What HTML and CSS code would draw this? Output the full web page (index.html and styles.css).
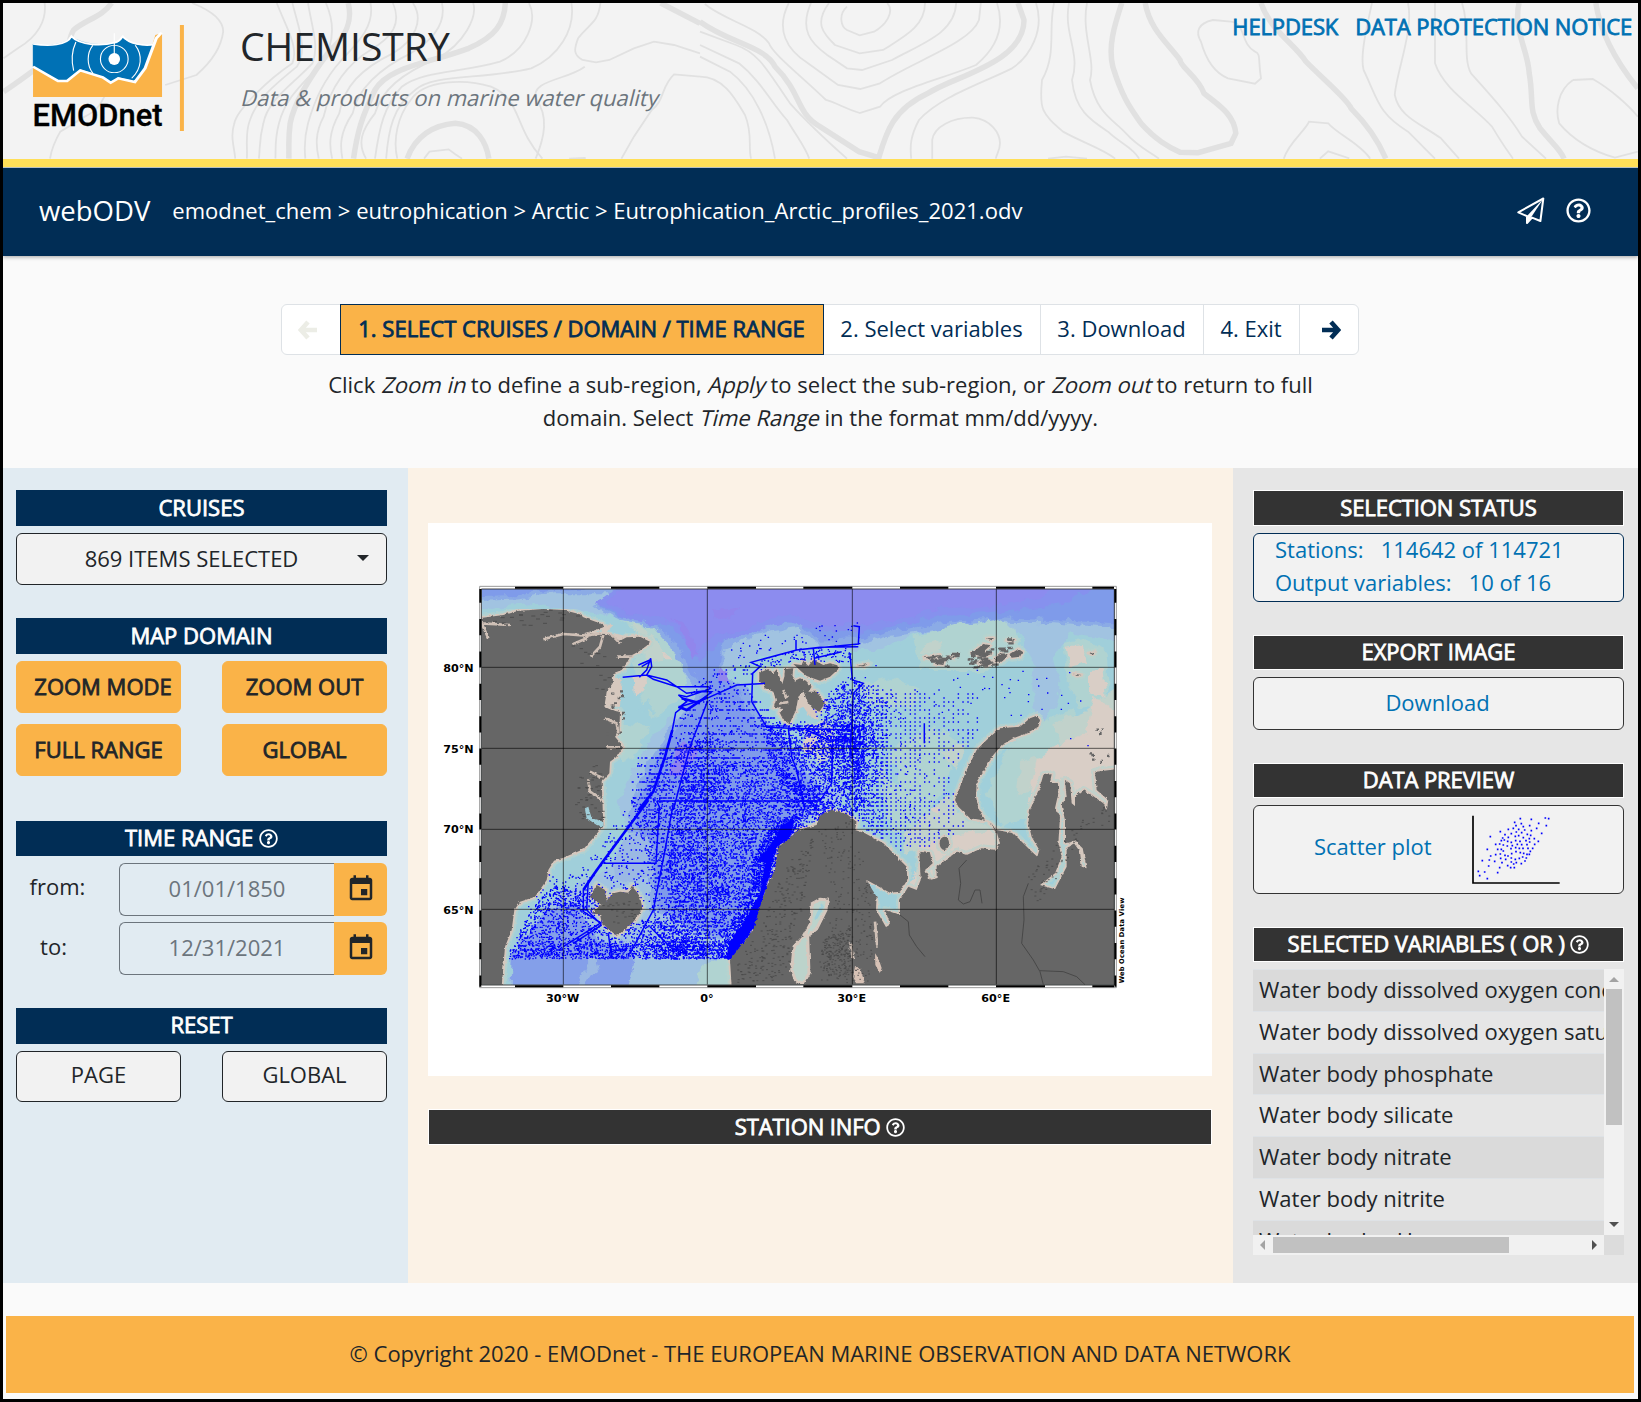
FILE: index.html
```html
<!DOCTYPE html>
<html lang="en">
<head>
<meta charset="utf-8">
<title>webODV - EMODnet Chemistry</title>
<link rel="stylesheet" href="styles.css">
</head>
<body>
<svg class="defs" width="0" height="0" aria-hidden="true">
  <symbol id="help" viewBox="0 0 512 512"><path fill="currentColor" d="M256 8C119.043 8 8 119.083 8 256c0 136.997 111.043 248 248 248s248-111.003 248-248C504 119.083 392.957 8 256 8zm0 448c-110.532 0-200-89.431-200-200 0-110.495 89.472-200 200-200 110.491 0 200 89.471 200 200 0 110.53-89.431 200-200 200zm107.244-255.2c0 67.052-72.421 68.084-72.421 92.863V300c0 6.627-5.373 12-12 12h-45.647c-6.627 0-12-5.373-12-12v-8.659c0-35.745 27.1-50.034 47.579-61.516 17.561-9.845 28.324-16.541 28.324-29.579 0-17.246-21.999-28.693-39.784-28.693-23.189 0-33.894 10.977-48.942 29.969-4.057 5.12-11.46 6.071-16.666 2.124l-27.824-21.098c-5.107-3.872-6.251-11.066-2.644-16.363C184.846 131.491 214.94 112 261.794 112c49.071 0 101.45 38.304 101.45 88.8zM298 368c0 23.159-18.841 42-42 42s-42-18.841-42-42 18.841-42 42-42 42 18.841 42 42z"/></symbol>
  <symbol id="calendar" viewBox="0 0 24 24"><path fill="currentColor" d="M17 12h-5v5h5v-5zM16 1v2H8V1H6v2H5c-1.11 0-1.99.9-1.99 2L3 19c0 1.1.89 2 2 2h14c1.1 0 2-.9 2-2V5c0-1.1-.9-2-2-2h-1V1h-2zm3 18H5V8h14v11z"/></symbol>
</svg>
<div class="page">
  <header class="masthead">
    <svg class="contours" viewBox="3 3 1635 156" preserveAspectRatio="none" aria-hidden="true">
      <g class="thin" transform="scale(.4464 .3333)">
        <path d="M100 9C105 60 85 110 40 145L8 175"/>
        <path d="M430 9C470 30 500 60 500 95C495 150 470 190 440 225L370 255"/>
        <path d="M255 250C225 290 235 320 190 350L135 395C120 430 115 450 112 476"/>
        <path d="M620 9C640 80 670 140 655 190C600 240 530 330 525 370C515 410 525 440 527 476"/>
        <path d="M655 9C670 90 690 150 665 200C610 260 575 300 560 360C548 400 555 440 553 476"/>
        <path d="M690 9C700 90 715 140 700 190C650 260 600 300 590 370C580 420 583 440 580 476"/>
        <path d="M730 9C750 70 750 130 720 190C680 250 640 290 625 370C615 420 618 440 617 476"/>
        <path d="M830 9C840 80 800 130 765 180C725 240 705 300 690 370C680 420 682 450 684 476"/>
        <path d="M880 9C900 70 880 110 830 150C780 190 740 260 725 350C705 400 708 440 714 476"/>
        <path d="M925 9C950 60 930 120 880 160C810 205 770 260 760 340C735 400 738 440 744 476"/>
        <path d="M990 9C1000 70 970 120 920 160C850 205 800 270 790 340C760 400 762 440 767 476"/>
        <path d="M1060 9C1070 50 1040 130 980 175C900 220 855 270 840 340C810 390 800 430 820 476"/>
        <path d="M1185 9C1205 60 1180 150 1120 185C1030 220 950 210 900 260C860 320 850 380 840 476"/>
        <path d="M1280 9C1290 90 1250 170 1190 205C1080 240 970 220 930 270C880 320 870 390 865 476"/>
        <path d="M1215 476C1150 380 1170 300 1100 260C1040 235 950 240 920 300C890 350 880 420 890 476"/>
        <path d="M1200 476C1220 410 1230 350 1200 295C1190 240 1270 240 1310 200"/>
        <path d="M1345 9C1340 70 1320 70 1295 115C1285 150 1285 165 1305 180L1335 187L1365 180L1420 145L1465 125L1510 135L1568 160"/>
        <path d="M1568 230L1510 223C1480 260 1490 300 1460 330L1420 410L1392 476"/>
        <path d="M950 476L962 455L1005 448L1020 463L1035 476M1275 476L1312 474"/>
      </g>
      <g class="thick" transform="scale(.4464 .3333)">
        <path d="M250 9C230 50 190 60 165 90C150 120 160 160 130 175C90 190 80 210 8 275"/>
        <path d="M780 9C790 60 775 110 740 150C700 220 660 300 650 370C645 420 648 440 647 476"/>
        <path d="M1132 9C1130 70 1110 110 1050 145C960 190 870 200 840 270C810 350 800 400 792 476"/>
        <path d="M912 476C930 410 970 375 1020 370C1070 375 1090 430 1095 476"/>
        <path d="M1480 9L1568 70"/>
      </g>
      <g class="thin" transform="translate(700 0) scale(.6 .3333)">
        <path d="M245 20C230 45 235 80 245 90L266 106L290 95C310 75 325 35 312 9M215 9C190 70 205 100 225 135L266 160L305 150C340 110 375 80 375 9M185 9C165 90 185 130 212 165L245 205L270 210L320 180C370 130 425 100 427 9M148 9C125 90 145 150 180 190L230 255L267 267L300 250C360 180 450 130 465 60L468 9"/>
        <path d="M495 9C510 90 490 150 460 195C400 240 320 270 300 320L266 339C240 325 230 310 210 300C170 230 120 160 115 130C95 80 40 60 8 12"/>
        <path d="M0 95L60 135C100 160 115 220 150 310C180 370 210 420 245 476M0 135L65 190C100 240 120 310 145 360C165 420 175 440 182 476M0 170L50 215C90 270 115 370 125 476M0 230C40 230 60 300 75 345C88 400 80 440 85 476"/>
        <path d="M560 9C575 90 550 170 520 205C470 250 400 290 365 360C350 410 350 440 352 476M590 9C580 90 595 160 570 240C565 330 570 340 605 395C640 430 670 445 692 476M615 9C605 100 635 160 620 240C625 330 650 360 680 395C700 430 720 440 732 476M645 9C635 100 660 180 650 240C660 340 690 360 710 400C730 440 745 450 765 476"/>
        <path d="M387 476V420C390 380 420 352 455 353C485 358 500 400 500 430C500 450 495 460 493 476M580 476L610 470L645 476"/>
        <path d="M855 60C830 70 825 95 835 125C845 190 860 220 880 235L925 251L935 235C930 180 935 160 925 155C900 130 910 70 885 65Z"/>
        <path d="M1120 9C1110 90 1100 170 1106 210C1130 300 1130 340 1180 395C1200 430 1210 450 1225 476M1180 9C1190 90 1160 220 1158 285C1165 350 1200 370 1235 415L1265 476M1225 9V190C1240 270 1290 320 1320 380C1340 440 1345 450 1355 476M1270 9C1285 90 1270 170 1285 220C1320 290 1350 350 1370 410L1410 476"/>
        <path d="M973 476C980 430 1010 390 1015 365L1047 370C1060 400 1100 430 1117 476M1033 476L1047 454L1082 475"/>
        <path d="M1455 240L1488 237C1520 270 1550 320 1563 350M1455 240C1430 270 1425 330 1432 370C1460 430 1500 460 1525 473L1563 455"/>
      </g>
      <g class="thick" transform="translate(700 0) scale(.6 .3333)">
        <path d="M0 65C50 130 110 140 125 200C170 280 160 340 200 380L265 455L298 473C310 400 320 330 380 280C420 230 540 190 540 60L530 9"/>
        <path d="M703 9C690 80 680 140 688 200C705 300 720 330 735 370C760 420 780 440 800 457L830 458L885 430L893 400C890 340 860 310 840 280C830 230 800 200 800 180C780 130 750 90 742 9"/>
        <path d="M935 9C950 90 990 130 1010 185C1040 240 1080 300 1085 325C1110 370 1130 420 1143 476"/>
        <path d="M1365 9C1355 90 1380 150 1382 220C1390 300 1380 330 1400 385C1420 430 1435 450 1440 476"/>
        <path d="M1493 9C1500 90 1520 170 1563 265"/>
      </g>
    </svg>
    <svg class="logo" viewBox="30 22 156 112" role="img" aria-label="EMODnet">
      <g transform="scale(.4464 .3333)">
        <path fill="#fab348" d="M74 200L130 245H150L180 212L230 234L248 248L265 236L302 248L325 205L348 105L363 100V291H74Z"/>
        <path fill="#0071b5" stroke="#0071b5" stroke-width="1" d="M74 132C105 138 145 138 160 110C185 135 235 138 255 130C265 135 275 110 275 113C290 130 315 140 345 134L325 205L302 244L265 232L248 246L230 231L180 208L150 240H130L74 200Z"/>
        <path fill="none" stroke="#fff" stroke-width="7" d="M74 200L130 243H150L180 211L230 232L248 248L265 235L302 246L325 205L350 115L362 98"/>
        <path fill="none" stroke="#fff" stroke-width="5" d="M74 132C110 139 150 137 160 109C180 138 230 138 255 128C270 125 272 112 275 109C290 133 320 138 345 134"/>
        <g fill="none" stroke="#fff" stroke-width="2.5"><ellipse cx="256" cy="177" rx="31" ry="41"/><path d="M256 100V165M170 126C160 155 160 185 165 212M208 136C194 160 194 195 208 220M303 136C320 165 318 205 295 235"/></g>
        <ellipse cx="256" cy="177" rx="13" ry="18" fill="#fff"/>
        <path fill="#fab348" d="M403 75H412V393H403Z"/>
      </g>
      <text x="32.5" y="126" class="logo-text" textLength="130" lengthAdjust="spacingAndGlyphs">EMODnet</text>
    </svg>
    <div class="titles">
      <h1>CHEMISTRY</h1>
      <p><i>Data &amp; products on marine water quality</i></p>
    </div>
    <nav class="top-links"><a>HELPDESK</a><a>DATA PROTECTION NOTICE</a></nav>
  </header>

  <div class="navbar">
    <span class="brand">webODV</span>
    <span class="crumbs">emodnet_chem &gt; eutrophication &gt; Arctic &gt; Eutrophication_Arctic_profiles_2021.odv</span>
    <span class="nav-icons">
      <svg width="28" height="28" viewBox="0 0 28 28"><path fill="none" stroke="#fff" stroke-width="2" stroke-linejoin="round" d="M1.3 15.3L26.3 1.5L23.4 24L15 20.6L10 26V19.2Z"/><path fill="#fff" d="M10 19L26.5 1.5L14 20.5L10 26.5Z"/></svg>
      <svg width="25" height="25"><use href="#help"/></svg>
    </span>
  </div>

  <section class="intro">
    <div class="steps">
      <span class="step step-prev"><svg width="20" height="20" viewBox="0 0 20 20"><path d="M10 2L2.8 10L10 18M3.5 10H19"/></svg></span>
      <span class="step step-1">1. SELECT CRUISES / DOMAIN / TIME RANGE</span>
      <span class="step step-2">2. Select variables</span>
      <span class="step step-3">3. Download</span>
      <span class="step step-4">4. Exit</span>
      <span class="step step-next"><svg width="20" height="20" viewBox="0 0 20 20"><path d="M10 2L17.2 10L10 18M16.5 10H1"/></svg></span>
    </div>
    <p class="hint">Click <i>Zoom in</i> to define a sub-region, <i>Apply</i> to select the sub-region, or <i>Zoom out</i> to return to full domain. Select <i>Time Range</i> in the format mm/dd/yyyy.</p>
  </section>

  <main class="workspace">
    <aside class="left">
      <h2 class="bar">CRUISES</h2>
      <div class="select"><span>869 ITEMS SELECTED</span><b class="caret"></b></div>
      <h2 class="bar gap-a">MAP DOMAIN</h2>
      <div class="buttons">
        <button class="btn warm wide">ZOOM MODE</button><button class="btn warm">ZOOM OUT</button>
        <button class="btn warm">FULL RANGE</button><button class="btn warm">GLOBAL</button>
      </div>
      <h2 class="bar time">TIME RANGE <svg class="q"><use href="#help"/></svg></h2>
      <div class="date"><label>from:</label><span class="field">01/01/1850</span><span class="cal"><svg width="30" height="30"><use href="#calendar"/></svg></span></div>
      <div class="date second"><label>to:</label><span class="field">12/31/2021</span><span class="cal"><svg width="30" height="30"><use href="#calendar"/></svg></span></div>
      <h2 class="bar reset">RESET</h2>
      <div class="buttons"><button class="btn plain">PAGE</button><button class="btn plain">GLOBAL</button></div>
    </aside>

    <section class="middle">
      <svg class="map" viewBox="24 39 2352 1659">
        <defs>
          <clipPath id="frame"><path d="M185 237H2083V1424H185Z"/></clipPath>
          <filter id="rough" x="0" y="0" width="1" height="1"><feTurbulence type="fractalNoise" baseFrequency=".09" numOctaves="3" seed="4"/><feDisplacementMap in="SourceGraphic" scale="9" xChannelSelector="R" yChannelSelector="G"/></filter>
          <filter id="wavy" x="0" y="0" width="1" height="1"><feTurbulence type="fractalNoise" baseFrequency=".03" numOctaves="4" seed="9"/><feDisplacementMap in="SourceGraphic" scale="32" xChannelSelector="R" yChannelSelector="G"/></filter>
          <g id="land">
            <path d="M175 325L250 315 290 303 370 297 430 300 480 313 490 322 545 342 550 352 520 362 490 370 560 372 600 392 620 382 660 380 690 395 680 407 655 425 632 437 620 460 605 480 580 490 578 520 560 545 553 590 575 600 600 605 598 665 585 680 610 710 590 740 570 755 568 790 545 815 550 945 535 965 490 1018 430 1043 402 1052 385 1080 380 1110 345 1160 300 1175 283 1200 275 1260 255 1310 245 1430 175 1430Z"/>
            <path d="M570 1160L560 1172 555 1140 530 1125 518 1145 512 1160 530 1175 545 1185 515 1208 540 1215 546 1240 590 1277 620 1255 650 1225 667 1195 660 1160 650 1145 635 1128 625 1148 600 1145 580 1150Z"/>
            <path d="M1018 488L1045 477 1060 490 1070 478 1078 500 1087 522 1093 500 1095 477 1120 475 1117 500 1125 512 1140 505 1165 515 1150 545 1135 560 1128 600 1108 642 1090 630 1078 605 1092 598 1062 590 1068 570 1060 545 1035 535 1018 512Z"/>
            <path d="M1120 462L1145 465 1150 452 1165 468 1180 450 1210 465 1230 460 1252 466 1255 477 1230 500 1200 512 1160 498 1145 485ZM1140 515L1150 512 1175 530 1165 545 1190 545 1215 580 1198 605 1175 592 1162 575Z"/>
            <path d="M1510 443L1560 434 1540 447ZM1550 452L1575 448 1570 465 1545 462ZM1590 440L1608 436 1600 444ZM1655 430L1690 402 1712 406 1690 425 1715 432 1690 442ZM1672 458L1700 448 1722 458 1700 468ZM1700 385L1722 384 1715 391ZM1760 390L1785 390 1780 396ZM1722 445L1745 430 1762 440 1745 455 1725 455ZM1768 434L1795 417 1808 425 1800 440 1775 443ZM2005 429L2025 426 2020 434ZM1960 491L1985 495 1970 498ZM1310 468L1345 462 1330 469Z"/>
            <path d="M1860 630L1855 650 1820 670 1780 685 1745 705 1720 735 1695 775 1670 815 1668 860 1675 895 1695 932 1650 925 1615 890 1605 870 1620 830 1640 780 1670 720 1700 690 1740 655 1800 650 1830 625 1850 617Z"/>
            <path d="M935 1430L930 1350 960 1310 1000 1260 1020 1190 1040 1130 1065 1080 1075 1010 1110 985 1135 960 1190 945 1200 915 1235 900 1280 912 1310 935 1305 960 1335 970 1390 1000 1425 1035 1460 1070 1462 1110 1440 1145 1410 1148 1340 1110 1370 1155 1368 1200 1400 1255 1410 1240 1395 1200 1440 1215 1440 1170 1465 1130 1490 1140 1502 1110 1498 1025 1530 1030 1538 1060 1515 1080 1530 1110 1550 1105 1550 1070 1610 1025 1640 1035 1685 1015 1730 1020 1740 1000 1730 965 1705 935 1730 960 1780 970 1830 1020 1852 1040 1858 1020 1835 980 1825 940 1830 900 1860 830 1870 795 1895 793 1890 815 1914 820 1915 850 1905 895 1920 920 1915 1000 1925 1040 1905 1090 1860 1125 1905 1138 1940 1070 1940 1015 1962 1000 1980 1025 1985 1070 2000 1075 1988 1015 1965 993 1935 1000 1935 930 1925 885 1940 860 1935 810 1950 820 1955 880 1985 905 1965 890 1965 860 1990 840 2015 855 2050 880 2060 900 2065 870 2030 840 2025 785 2090 778 2090 1430Z"/>
            <ellipse cx="1573" cy="1000" rx="14" ry="20"/>
          </g>
        </defs>
        <path fill="#fff" d="M24 39H2376V1698H24Z"/>
        <g clip-path="url(#frame)">
          <path fill="#a0cfda" d="M180 230H2090V1430H180Z"/>
          <g filter="url(#wavy)">
            <path fill="#a1c3e1" d="M100 180H2190V400L1950 370 1900 450 1920 540 1880 640 1840 590 1840 470 1800 370 1690 345 1500 370 1380 420 1200 420 1010 440 900 500 1000 620 1180 760 1280 850 1160 940 1090 1050 1000 1200 940 1300 930 1480H260L280 1320 380 1180 480 1120 580 1060 630 960 590 880 680 700 800 580 790 470 700 360 560 315 350 285 100 300Z"/>
            <path fill="#8babe6" d="M100 180H2190V362L1900 340 1740 338 1600 352 1400 382 1340 400 1200 412 1130 350 1000 375 910 420 910 500 975 520 1010 600 1100 700 1215 850 1110 950 1050 1080 990 1200 900 1300 690 1200 690 1100 630 1000 630 880 690 750 780 610 840 540 790 480 750 405 690 350 600 327 520 292 610 250 400 250 300 268 100 275Z"/>
            <path fill="#7f9bea" d="M100 180H2190V345L1900 330 1740 325 1600 335 1400 365 1340 383 1200 395 1130 333 1000 355 910 395 890 500 950 525 980 600 1070 700 1190 850 1090 950 1030 1080 970 1200 900 1280 710 1200 710 1100 650 1000 650 880 710 750 800 610 860 540 810 480 770 400 700 340 600 317 540 290 630 230 400 240 300 255 100 260Z"/>
            <path fill="#8691ee" d="M530 280L640 200H2090L1900 290 1700 310 1560 315 1450 345 1340 365 1200 360 1100 335 960 380 890 400 840 455 750 345 640 330Z"/>
            <path fill="#8c8cef" d="M560 275L660 200H1940L1860 265 1700 290 1560 295 1450 325 1340 345 1200 340 1100 315 950 365 870 385 830 430 760 335 640 315Z"/>
            <path fill="#9186ec" d="M760 320L800 350 835 430 820 450 790 380ZM740 790L775 710 800 700 840 720 790 800ZM870 300L960 290 950 320 880 325ZM890 480L910 475 930 520 900 515Z"/>
            <path fill="#849fe9" d="M270 1480L275 1340 370 1200 460 1180 540 1300 640 1300 640 1360 610 1480Z"/>
            <path fill="#9bb9e3" d="M430 1480L520 1340 550 1340 460 1480ZM570 1060L630 970 690 980 700 1100 580 1120Z"/>
            <path fill="#b0d3d1" d="M600 330L700 350 760 420 800 500 780 570 740 600 690 620 660 560 640 450 720 400ZM600 640L690 650 640 740 600 760ZM1480 380L1600 345 1730 330 1790 360 1800 420 1760 450 1700 480 1500 480ZM1370 790L1440 700 1540 650 1620 690 1560 860 1480 960 1420 970ZM1770 700L1850 650 1960 600 1990 720 1860 900 1750 950 1700 850ZM1930 400L2000 385 2060 430 2070 600 1980 590 1940 500ZM800 1480L850 1360 930 1340 940 1480ZM1350 580L1300 530 1420 500 1500 540 1480 600Z"/>
            <path fill="#c1d2cb" d="M640 340L690 360 730 440 680 460ZM1450 970L1580 860 1650 930 1750 950 1700 1010 1450 1030ZM1900 640L2000 600 2120 520V700L1930 720ZM1520 400L1570 390 1550 430 1500 430ZM1800 760L1860 740 1850 840 1790 860ZM1560 720L1640 700 1610 780ZM1150 640L1220 630 1260 720 1190 760 1150 700Z"/>
            <path fill="#a0cfda" d="M1400 760L1440 770 1430 830 1400 820ZM650 600L690 570 700 610Z"/>
            <path fill="#d9cec6" d="M1850 750L1920 700 2000 670 2020 560 2120 620V910H1820ZM1940 410L1985 405 1995 460 1950 470ZM2010 480L2050 475 2060 560 2010 550ZM640 500L690 490 670 540 645 550ZM720 430L750 430 760 445 730 445ZM1530 900L1555 890 1550 925ZM1440 1160L1500 1060 1490 1010 1640 970 1740 960 1740 1040 1600 1050 1530 1130ZM1150 680L1190 680 1180 720 1160 730Z"/>
          </g>
          <g filter="url(#rough)">
            <use href="#land" fill="none" stroke="#b8d3cd" stroke-width="24" stroke-linejoin="round" opacity=".7"/>
            <use href="#land" fill="none" stroke="#d6c8be" stroke-width="11" stroke-linejoin="round"/>
            <path fill="#d6c8be" d="M545 342L580 345 560 365 620 378 640 385 600 410 545 385ZM575 500L605 510 600 590 550 590 560 545ZM1125 560L1165 545 1185 600 1195 630 1170 620 1150 590 1130 600Z"/>
          </g>
          <path id="stations" fill="none" stroke="#00f" stroke-width="4.2"/>
          <path fill="#00f" d="M1085 945L1125 925 1110 985 1070 1010 1050 1090 1035 1140 1010 1240 935 1348H920L925 1300 975 1230 1020 1150 1035 1060 1010 1050 1050 1010Z" filter="url(#rough)"/>
          <g fill="#666" filter="url(#rough)"><use href="#land"/><path id="islets" fill="none" stroke="#666" stroke-width="7"/></g>
          <g class="fjords" filter="url(#rough)">
            <path d="M370 388L430 372 500 377 540 370M460 402L500 385 505 370M512 440L540 410 550 375M183 340L270 345M183 335L205 385M570 370L600 400M590 440L640 440"/>
            <path stroke="#a0cfda" d="M510 785L550 805M505 810L510 845 545 870M555 625L590 640 595 670M560 712L600 712"/>
            <path stroke-width="5" d="M1080 580L1105 576M1090 540L1100 565M1290 1300L1300 1345M1365 1235L1372 1310"/>
          </g>
          <g filter="url(#rough)">
            <path fill="#bcd3cb" stroke="#d6c8be" stroke-width="9" d="M1200 1168L1222 1170 1218 1200 1190 1256 1163 1278 1167 1390 1150 1420 1127 1412 1115 1380 1122 1310 1152 1278 1172 1240 1177 1180Z"/>
            <path fill="#a0cfda" d="M1205 1180L1212 1190 1190 1230 1183 1225Z"/>
            <path fill="#d6c1b5" d="M1305 1368L1320 1375 1335 1420 1308 1420 1300 1400ZM1365 1330L1375 1345 1387 1380 1380 1390 1366 1365Z"/>
            <path fill="#a0cfda" d="M1345 1120L1400 1152 1430 1155 1425 1195 1385 1185ZM530 945L500 925 495 895 505 890 515 925 550 935V950Z"/>
          </g>
          <path id="relief" fill="none" stroke="#454545" stroke-width="2.2"/>
          <path class="river" d="M1640 1050L1617 1075 1622 1120 1615 1170 1630 1182 1650 1175 1665 1140 1680 1140 1686 1180M1440 1215L1465 1235 1468 1275 1490 1310 1515 1340M1825 1120L1810 1160 1812 1230 1805 1300 1840 1350 1860 1385 1870 1424M1860 1382L1930 1385 1970 1400 1995 1424"/>
          <g class="tracks">
            <path d="M608 502L680 495 740 510 800 550 855 542 872 535 865 530 770 530 700 508 680 495M658 502L680 480 692 445 695 470 680 495M655 465L690 450M665 470L690 455M775 555L800 560 845 545 875 545 845 570 780 590 800 575 775 555M790 590L767 608 757 660M862 575L810 710 760 900"/>
            <path d="M845 572L950 525 1035 520M995 575L998 490 1020 470 993 457 1130 420 1200 412 1315 410M1128 390V420L1315 402 1318 350 1300 347M1180 415L1185 465M1183 445L1265 425M995 575L1040 652 1110 655 1290 660M1160 660L1225 690H1300M1105 655L1115 740 1130 780 1155 900M1290 430L1297 510 1330 520 1300 550 1290 740M1513 640V700M1238 700L1235 820 1200 873H1140"/>
            <path d="M710 873H1190M710 873L718 890 708 1060H550M760 880L735 1020 700 1200 630 1330M505 1110L500 1200 540 1240 430 1310M490 1140V1205L545 1240M565 1270L575 1345M460 1300L545 1245M690 1250L760 1320"/>
            <path d="M757 660L735 740 700 845 655 900M685 870L545 1060 520 1095 490 1140M775 590L800 600 860 560M785 565L840 580"/>
          </g>
          <g class="grid"><path d="M430 237V1424M862 237V1424M1297 237V1424M1729 237V1424M185 472H2083M185 715H2083M185 958H2083M185 1198H2083"/></g>
        </g>
        <path fill="none" stroke="#999" stroke-width="3" d="M179 229H2089V1433H179Z"/>
        <path fill="none" stroke="#222" stroke-width="2.5" d="M184 237H2083V1425H184Z"/>
        <g fill="none" stroke="#000" stroke-width="6">
          <path d="M285 233H430M573 233H718M862 233H1008M1150 233H1297M1440 233H1585M1728 233H1875M2017 233H2082M285 1429H430M573 1429H718M862 1429H1008M1150 1429H1297M1440 1429H1585M1728 1429H1875M2017 1429H2082"/>
          <path d="M181 237V278M2086 237V278M181 327V1430M2086 327V1430" stroke-dasharray="48.6"/>
        </g>
        <g class="axis">
          <text x="161" y="485" text-anchor="end">80°N</text><text x="161" y="728" text-anchor="end">75°N</text>
          <text x="161" y="970" text-anchor="end">70°N</text><text x="161" y="1211" text-anchor="end">65°N</text>
          <text x="428" y="1475" text-anchor="middle">30°W</text><text x="861" y="1475" text-anchor="middle">0°</text>
          <text x="1295" y="1475" text-anchor="middle">30°E</text><text x="1727" y="1475" text-anchor="middle">60°E</text>
          <text class="credit" transform="translate(2112 1420) rotate(-90)" textLength="257">Web Ocean Data View</text>
        </g>
      </svg>
      <h2 class="bar dark">STATION INFO <svg class="q"><use href="#help"/></svg></h2>
    </section>

    <aside class="right">
      <h2 class="bar dark">SELECTION STATUS</h2>
      <div class="card status"><div>Stations: &nbsp; 114642 of 114721</div><div>Output variables: &nbsp; 10 of 16</div></div>
      <h2 class="bar dark gap-b">EXPORT IMAGE</h2>
      <a class="card download">Download</a>
      <h2 class="bar dark gap-b">DATA PREVIEW</h2>
      <a class="card scatter"><span>Scatter plot</span>
        <svg width="90" height="72" viewBox="756 1062 270 216"><path d="M759 1067V1269H1019" fill="none" stroke="#000" stroke-width="5"/><path class="points" d="M901 1076h0M934 1078h0M976 1074h0M986 1076h0M884 1087h0M904 1091h0M956 1090h0M979 1097h0M929 1097h0M888 1097h0M910 1100h0M880 1105h0M896 1108h0M914 1110h0M934 1112h0M950 1105h0M965 1120h0M865 1108h0M841 1115h0M811 1130h0M874 1121h0M889 1116h0M905 1118h0M922 1123h0M932 1126h0M855 1124h0M865 1132h0M886 1129h0M896 1127h0M910 1133h0M928 1136h0M943 1136h0M955 1144h0M848 1134h0M844 1142h0M853 1140h0M863 1144h0M874 1147h0M887 1142h0M900 1144h0M918 1142h0M929 1146h0M944 1153h0M827 1153h0M839 1152h0M850 1155h0M862 1158h0M877 1157h0M892 1153h0M905 1154h0M921 1154h0M938 1165h0M802 1168h0M833 1168h0M844 1168h0M850 1173h0M873 1166h0M887 1163h0M898 1165h0M909 1165h0M924 1165h0M931 1174h0M812 1188h0M827 1184h0M841 1182h0M855 1186h0M864 1188h0M875 1181h0M888 1175h0M901 1178h0M911 1180h0M921 1183h0M928 1183h0M787 1202h0M808 1200h0M824 1204h0M842 1195h0M857 1198h0M874 1194h0M886 1198h0M898 1195h0M908 1191h0M919 1194h0M806 1218h0M846 1208h0M863 1217h0M874 1206h0M881 1212h0M889 1208h0M904 1211h0M915 1203h0M839 1223h0M872 1223h0M883 1223h0M775 1234h0M794 1236h0M833 1238h0M779 1247h0M802 1256h0"/></svg></a>
      <h2 class="bar dark gap-b">SELECTED VARIABLES ( OR ) <svg class="q"><use href="#help"/></svg></h2>
      <div class="list">
        <div class="rows">
          <div>Water body dissolved oxygen concentration</div><div>Water body dissolved oxygen saturation</div><div>Water body phosphate</div><div>Water body silicate</div><div>Water body nitrate</div><div>Water body nitrite</div><div>Water body pH</div>
        </div>
        <div class="vscroll"><u class="up"></u><b></b><u class="down"></u></div>
        <div class="hscroll"><u class="prev"></u><b></b><u class="next"></u></div>
        <div class="corner"></div>
      </div>
    </aside>
  </main>
  <footer>© Copyright 2020 - EMODnet - THE EUROPEAN MARINE OBSERVATION AND DATA NETWORK</footer>
</div>
<script src="map.js"></script>
</body>
</html>
```
FILE: map.js
```js
// Seeded generator keeps the station scatter identical on every load.
var seed = 20211;
function rnd() {
  seed = (seed * 1664525 + 1013904223) % 4294967296;
  return seed / 4294967296;
}

function inside(poly, x, y) {
  var hit = false;
  for (var i = 0, j = poly.length - 2; i < poly.length; j = i, i += 2) {
    var xi = poly[i], yi = poly[i + 1], xj = poly[j], yj = poly[j + 1];
    if ((yi > y) !== (yj > y) && x < (xj - xi) * (y - yi) / (yj - yi) + xi) hit = !hit;
  }
  return hit;
}

// Fills a polygon with marks; "snap" is the share of marks placed on survey rows.
function scatter(poly, count, snap, gx, gy, len) {
  var xs = poly.filter(function (v, i) { return i % 2 === 0; });
  var ys = poly.filter(function (v, i) { return i % 2 === 1; });
  var x0 = Math.min.apply(null, xs), x1 = Math.max.apply(null, xs);
  var y0 = Math.min.apply(null, ys), y1 = Math.max.apply(null, ys);
  var out = '';
  for (var n = 0; n < count;) {
    var x = x0 + rnd() * (x1 - x0), y = y0 + rnd() * (y1 - y0);
    if (!inside(poly, x, y)) continue;
    n++;
    if (rnd() < snap) {
      y = Math.round(y / gy) * gy;
      if (gx) x = Math.round(x / gx) * gx;
    }
    out += 'M' + x.toFixed(0) + ' ' + y.toFixed(0) + 'h' + len;
  }
  return out;
}

// Normally distributed marks around a centre, for heavily sampled spots.
function cluster(cx, cy, sx, sy, count) {
  var out = '';
  for (var n = 0; n < count; n++) {
    var x = cx + (rnd() + rnd() + rnd() - 1.5) * 1.6 * sx;
    var y = Math.min(1347, cy + (rnd() + rnd() + rnd() - 1.5) * 1.6 * sy);
    out += 'M' + x.toFixed(0) + ' ' + y.toFixed(0) + 'h4.2';
  }
  return out;
}

document.getElementById('stations').setAttribute('d',
  scatter([255, 1347, 330, 1200, 400, 1130, 520, 1150, 600, 1250, 700, 1220, 935, 1347], 1500, 0.1, 0, 12, 4.2) +
  scatter([260, 1347, 290, 1300, 900, 1300, 935, 1347], 600, 0.2, 0, 12, 4.2) +
  scatter([300, 1210, 400, 1120, 500, 1060, 640, 860, 720, 800, 700, 1210, 480, 1190], 340, 0.2, 0, 12, 4.2) +
  scatter([630, 880, 720, 715, 860, 700, 860, 1347, 680, 1347, 700, 1100], 1200, 0.4, 0, 12, 4.2) +
  scatter([650, 740, 760, 720, 860, 700, 1000, 760, 860, 880, 620, 880], 420, 0.85, 0, 24, 4.2) +
  scatter([760, 640, 800, 600, 900, 570, 1000, 560, 1130, 700, 1150, 760, 860, 760], 520, 0.7, 0, 24, 4.2) +
  scatter([790, 760, 1050, 750, 1250, 900, 1080, 990, 940, 1347, 760, 1330, 730, 1100], 4400, 0.3, 0, 12, 4.2) +
  scatter([1020, 640, 1130, 640, 1330, 640, 1330, 870, 1290, 930, 1120, 900, 1050, 750], 2000, 0.3, 0, 12, 4.2) +
  scatter([1060, 940, 1150, 900, 1130, 980, 1060, 1090, 1020, 1240, 940, 1347, 890, 1347, 930, 1240, 990, 1130, 1000, 1040], 1300, 0, 0, 12, 4.2) +
  scatter([1210, 560, 1290, 500, 1340, 530, 1370, 700, 1360, 960, 1290, 900, 1220, 700], 700, 0.4, 7, 12, 4.2) +
  cluster(1290, 670, 65, 90, 550) + cluster(850, 705, 60, 30, 140) + cluster(1250, 690, 60, 30, 160) +
  cluster(760, 1320, 30, 20, 90) + cluster(895, 1150, 25, 25, 90) + cluster(440, 1165, 50, 35, 90) + cluster(720, 920, 50, 25, 60) +
  scatter([1300, 510, 1360, 520, 1400, 560, 1400, 980, 1360, 980, 1300, 920], 480, 0.75, 14, 12, 4.2) +
  scatter([1360, 545, 1500, 545, 1500, 980, 1440, 1030, 1340, 960], 620, 0.9, 14.4, 12, 4.2) +
  scatter([1460, 545, 1660, 545, 1690, 640, 1600, 780, 1600, 900, 1580, 1000, 1480, 1010], 270, 0.95, 14.4, 12, 4.2) +
  scatter([1340, 850, 1590, 850, 1640, 950, 1540, 1010, 1420, 1030], 110, 0.95, 14.4, 12, 4.2) +
  scatter([865, 480, 990, 460, 1000, 600, 870, 600, 790, 530], 120, 0.6, 0, 12, 4.2) +
  scatter([890, 430, 970, 380, 1090, 370, 1330, 320, 1330, 400, 1100, 430, 990, 470], 50, 0, 0, 12, 4.2) +
  scatter([1000, 455, 1130, 420, 1290, 415, 1300, 460, 1130, 450, 1020, 480], 110, 0, 0, 12, 4.2) +
  scatter([1480, 480, 1980, 480, 2010, 720, 1900, 700, 1740, 620], 34, 0, 0, 12, 4.2));

document.getElementById('islets').setAttribute('d',
  scatter([1515, 445, 1600, 425, 1615, 440, 1570, 475, 1540, 465], 14, 0, 0, 1, 15) +
  scatter([1620, 465, 1655, 420, 1710, 395, 1760, 425, 1725, 465, 1680, 475], 34, 0, 0, 1, 14) +
  scatter([1700, 385, 1790, 380, 1760, 420], 3, 0, 0, 1, 16) +
  scatter([2035, 640, 2080, 640, 2080, 770, 2000, 750], 8, 0, 0, 1, 8) +
  scatter([525, 600, 600, 520, 610, 620, 605, 740, 570, 700], 14, 0, 0, 1, 9));

document.getElementById('relief').setAttribute('d',
  scatter([950, 1350, 1020, 1260, 1080, 1090, 1180, 970, 1160, 1150, 1110, 1300, 1100, 1410, 950, 1420], 260, 0, 0, 1, 6) +
  scatter([1190, 960, 1290, 930, 1350, 1130, 1360, 1420, 1180, 1420, 1240, 1180], 240, 0, 0, 1, 5) +
  scatter([1200, 1290, 1290, 1250, 1290, 1400, 1210, 1400], 180, 0, 0, 1, 5) +
  scatter([190, 330, 380, 300, 480, 320, 400, 345, 190, 350], 22, 0, 0, 1, 12) +
  scatter([450, 400, 560, 400, 580, 480, 540, 600, 520, 560], 14, 0, 0, 1, 10) +
  scatter([470, 780, 540, 760, 550, 930, 460, 940], 45, 0, 0, 1, 8) +
  scatter([540, 1180, 650, 1170, 640, 1240, 580, 1260], 25, 0, 0, 1, 7) +
  scatter([1820, 1100, 1930, 980, 2060, 860, 2075, 980, 2000, 940, 1880, 1160, 1840, 1180], 70, 0, 0, 1, 6));
```
FILE: styles.css
```css
* { box-sizing: border-box; }
body { margin: 0; font: 400 22px/33px "Open Sans", "Noto Sans", sans-serif; color: #212529; background: #fafafa; }
.defs { position: absolute; }
.page { width: 1641px; height: 1402px; border: 3px solid #000; background: #fafafa; overflow: hidden; }
h1, h2, p { margin: 0; font-weight: 400; }
/* Slanted upright face instead of the narrower true italic */
i { display: inline-block; font-style: normal; transform: skewX(-14deg); transform-origin: 0 76%; }

.masthead { position: relative; height: 164px; background: #f3f3f3; border-bottom: 8px solid #ffdf58; display: flex; align-items: flex-start; }
.contours { position: absolute; left: 0; top: 0; width: 1635px; height: 156px; }
.contours path { fill: none; stroke: #e1e1e1; vector-effect: non-scaling-stroke; }
.thin path { stroke-width: 1.8; }
.thick path { stroke-width: 5.5; }
.logo { position: relative; width: 156px; height: 112px; margin: 19px 0 0 27px; }
.logo-text { font: 500 30.5px Roboto, sans-serif; fill: #000; stroke: #000; stroke-width: .3; }
.titles { position: relative; margin: 14px 0 0 54px; }
.titles h1 { font-size: 39px; line-height: 58px; }
.titles p { color: #6c757d; margin-top: 6px; }
.top-links { position: relative; margin-left: auto; padding: 7px 6px 0 0; display: flex; gap: 17px; color: #0071b3; letter-spacing: -.12px; -webkit-text-stroke: .8px #0071b3; }

.navbar { height: 89px; background: #012d55; border-top: 1px solid #b9c0bf; color: #fff; display: flex; align-items: center; padding: 0 47px 3px 36px; box-shadow: 0 1px 4px rgba(0,0,0,.35); }
.brand { font-size: 27.5px; margin-right: 22px; }
.crumbs { letter-spacing: .02px; }
.nav-icons { margin-left: auto; display: flex; gap: 21px; align-items: center; }

.intro { height: 212px; padding-top: 48px; display: flex; flex-direction: column; align-items: center; }
.steps { display: flex; width: 1078px; height: 51px; margin-right: 2px; background: #fff; border: 1px solid #dee2e6; border-radius: 6px; color: #012d55; }
.step { border-right: 1px solid #dee2e6; display: flex; align-items: center; justify-content: center; white-space: nowrap; padding-bottom: 2px; }
.step svg { fill: none; stroke: #012d55; stroke-width: 4.6; margin-top: 2px; }
.step-prev { width: 58px; border: 0; padding-right: 6px; }
.step-prev svg { stroke: #ecede6; }
.step-1 { width: 484px; margin: -1px 0; background: #fab348; border: 1px solid #012d55; -webkit-text-stroke: .8px #012d55; }
.step-2 { width: 217px; }
.step-3 { width: 163px; }
.step-4 { width: 96px; }
.step-next { flex: 1; border: 0; padding-left: 4px; }
.hint { width: 1040px; margin-top: 13px; text-align: center; }

.workspace { height: 815px; display: grid; grid-template-columns: 405px 825px 405px; }
.left { background: #e1ebf2; padding: 22px 21px 0 13px; }
.middle { background: #fbf2e6; padding: 55px 21px 0 20px; }
.right { background: #e6e6e6; padding: 22px 14px 0 20px; }
.bar { height: 36px; padding-top: 1px; background: #012d55; color: #fff; font-size: 22px; line-height: 33px; text-align: center; -webkit-text-stroke: .8px #fff; }
.bar.dark { background: #333; border: 1px solid #fff; padding-top: 0; letter-spacing: -.08px; line-height: 32px; }
.q { width: 19px; height: 19px; vertical-align: -2px; }
.gap-a { margin-top: 33px; }
.gap-b.bar { margin-top: 33px; height: 35px; line-height: 31px; }
.select { height: 52px; margin-top: 7px; border: 1px solid #212529; border-radius: 6px; background: #f2f2f2; display: flex; align-items: center; justify-content: center; padding-bottom: 2px; }
.select span { margin-left: 51px; }
.caret { margin-left: 59px; border: 6.5px solid transparent; border-top-color: #212529; border-bottom: 0; }
.buttons { display: grid; grid-template-columns: 165px 165px; justify-content: space-between; row-gap: 11px; margin-top: 7px; }
.btn { font: inherit; color: #212529; height: 52px; padding: 0 0 1px; border-radius: 6px; border: 1px solid #212529; background: #f2f2f2; }
.warm { background: #fab348; border-color: #fab348; -webkit-text-stroke: .8px #212529; }
.wide { padding-left: 9px; }
.plain { height: 51px; padding-bottom: 4px; }
.time { margin-top: 45px; height: 35px; padding-top: 0; margin-bottom: 7px; }
.date { height: 53px; display: grid; grid-template-columns: 103px 215px 53px; }
.date label { padding-top: 7px; text-align: center; padding-right: 20px; }
.second { margin-top: 6px; }
.second label { padding-top: 8px; padding-right: 28px; }
.field { border: 1px solid #6c757d; border-right: 0; border-radius: 6px 0 0 6px; color: #6c757d; text-align: center; padding-top: 8px; }
.cal { background: #fab348; border-radius: 0 6px 6px 0; display: flex; align-items: center; justify-content: center; }
.cal svg { margin-bottom: 2px; }
.reset { margin-top: 33px; padding-top: 0; }

.map { display: block; width: 784px; height: 553px; margin-bottom: 33px; }
.fjords path { fill: none; stroke: #cfc0b6; stroke-width: 8; }
.tracks path { fill: none; stroke: #00f; stroke-width: 4.5; }
.tracks path:last-child { stroke-width: 8; }
.river { fill: none; stroke: #484848; stroke-width: 3; }
.grid path { fill: none; stroke: #000; stroke-opacity: .6; stroke-width: 3; }
.axis { font: 700 33.5px "DejaVu Sans", sans-serif; }
.axis .credit { font-size: 20px; }

.card { display: block; margin-top: 7px; border: 1px solid #333; border-radius: 6px; background: #f2f2f2; color: #0071b3; }
.status { height: 69px; padding: 0 0 0 21px; border-color: #012d55; line-height: 33px; }
.status div { white-space: nowrap; position: relative; top: -1px; }
.download { height: 53px; text-align: center; padding: 8px 2px 0 0; }
.scatter { height: 89px; display: flex; align-items: center; padding-left: 60px; }
.scatter svg { margin: 0 0 0 40px; }
.scatter span { margin-top: -6px; }
.points { fill: none; stroke: #00f; stroke-width: 5; stroke-linecap: square; }
.list { height: 286px; margin-top: 7px; display: grid; grid-template: 266px 20px / 351px 20px; }
.rows { overflow: hidden; }
.rows div { height: 41.8px; border-top: 1px solid #dee2e6; padding: 3px 6px 0; white-space: nowrap; }
.rows div:nth-child(odd) { background: #dadada; }
.vscroll, .hscroll { background: #f1f1f1; display: flex; align-items: center; }
.vscroll { flex-direction: column; }
.vscroll b { width: 16px; height: 136px; margin-top: 7px; background: #c1c1c1; }
.hscroll b { width: 236px; height: 16px; margin-left: 8px; background: #c1c1c1; }
.up, .down, .prev, .next { border: 5px solid transparent; }
.up { margin-top: 8px; border-bottom-color: #a3a3a3; border-top: 0; }
.down { margin: auto 0 8px; border-top-color: #505050; border-bottom: 0; }
.prev { margin-left: 7px; border-right-color: #a3a3a3; border-left: 0; }
.next { margin: 0 7px 0 auto; border-left-color: #505050; border-right: 0; }
.corner { background: #dcdcdc; }
footer { margin: 33px 4px 0 3px; height: 77px; background: #fab348; text-align: center; padding-top: 21px; letter-spacing: -.03px; }
```
